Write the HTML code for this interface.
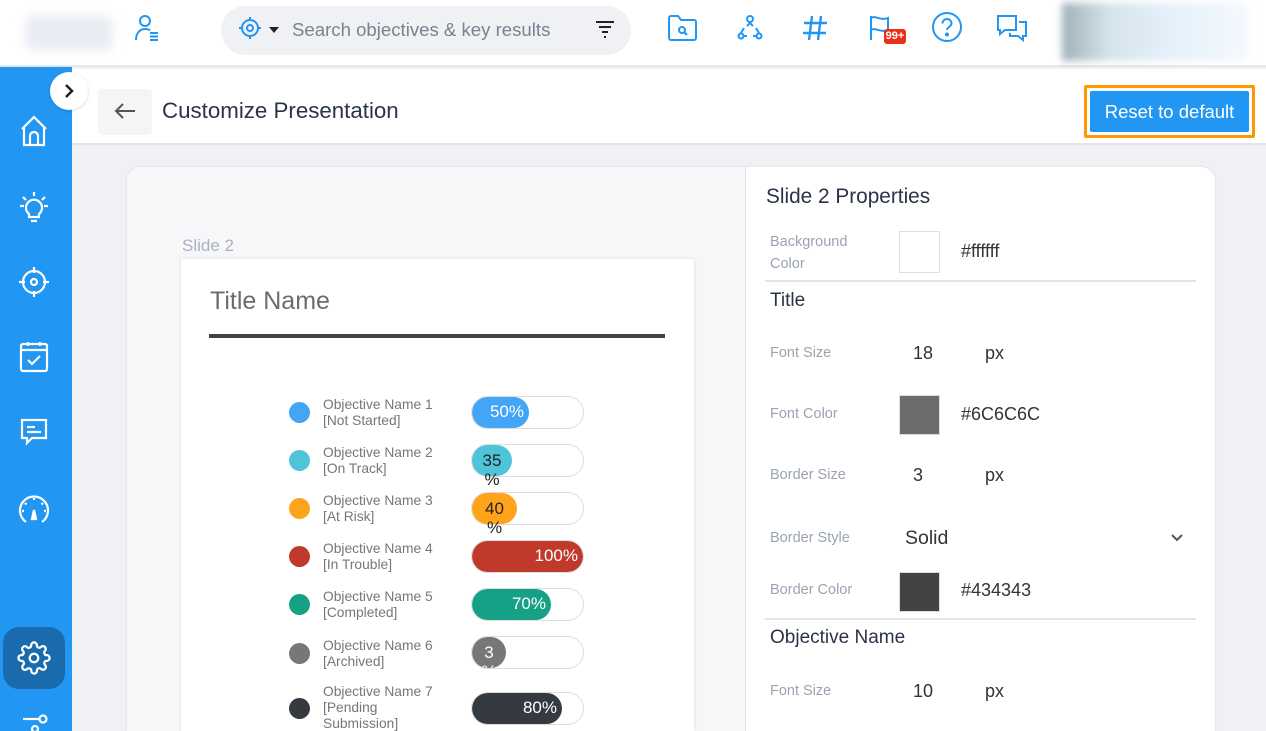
<!DOCTYPE html>
<html style="height:731px;overflow:hidden"><head><meta charset="utf-8"><style>
*{margin:0;padding:0;box-sizing:border-box}
body{width:1266px;height:731px;overflow:hidden;background:#f0f1f5;font-family:"Liberation Sans",sans-serif;position:relative}
.a{position:absolute}
.top{left:0;top:0;width:1266px;height:67px;background:#fff;border-bottom:2px solid #e4e6ea}
.side{left:0;top:67px;width:72px;height:664px;background:#2196f3}
.hdr{left:72px;top:69px;width:1194px;height:76px;background:#fff;border-bottom:2px solid #e2e4e8}
.lbl{color:#9aa3b2;font-size:14.5px}
.val{color:#333;font-size:18px}
.sec{color:#2b3348;font-size:19px}
.row{font-size:13.8px;color:#777;line-height:16px}
.bar{width:113px;height:33px;border:1.5px solid #ddd;border-radius:17px;overflow:hidden;left:471px}
.fill{position:absolute;left:0;top:0;bottom:0;border-radius:17px;color:#fff;font-size:17px;text-align:right;padding-right:5px;line-height:30px}
.dot{width:21px;height:21px;border-radius:50%;left:289px}
svg{position:absolute}
</style></head><body>
<div class="a top"></div>
<div class="a" style="left:25px;top:16px;width:88px;height:34px;background:#e9ecf3;filter:blur(5px);border-radius:8px"></div>
<svg style="left:134px;top:14px" width="26" height="28" viewBox="0 0 26 28" fill="none" stroke="#2196f3" stroke-width="2"><circle cx="11" cy="7" r="5"/><path d="M2 26c0-7 4-11 9-11 2 0 4 .5 5 1.5"/><path d="M16 19h8M16 22.5h8M16 26h8"/></svg>
<div class="a" style="left:221px;top:6px;width:410px;height:49px;background:#f0f1f5;border-radius:25px"></div>
<svg style="left:238px;top:16px" width="26" height="26" viewBox="0 0 26 26" fill="none" stroke="#2196f3" stroke-width="2"><circle cx="12" cy="12" r="8"/><circle cx="12" cy="12" r="3"/><path d="M12 1v4M12 19v4M1 12h4M19 12h4"/></svg>
<svg style="left:268px;top:26px" width="12" height="8"><path d="M1 1h10l-5 6z" fill="#222"/></svg>
<div class="a" style="left:292px;top:19px;font-size:18.6px;color:#7c8190">Search objectives &amp; key results</div>
<svg style="left:595px;top:19px" width="20" height="20" fill="none" stroke="#222" stroke-width="2"><path d="M1 3h18M4 8h12M7 13h6M9 18h2"/></svg>
<svg style="left:667px;top:14px" width="32" height="28" fill="none" stroke="#2196f3" stroke-width="2"><path d="M2 4a2 2 0 012-2h7l3 4h13a2 2 0 012 2v16a2 2 0 01-2 2H4a2 2 0 01-2-2z"/><circle cx="15" cy="16" r="3"/><path d="M17 18l3 3"/></svg>
<svg style="left:736px;top:14px" width="28" height="28" fill="none" stroke="#2196f3" stroke-width="2"><circle cx="14" cy="5" r="3"/><path d="M11 12l3-3 3 3"/><circle cx="5" cy="22" r="2.5"/><circle cx="23" cy="22" r="2.5"/><path d="M5 19l3-5M23 19l-3-5M8 22h3M17 22h3"/></svg>
<svg style="left:802px;top:14px" width="26" height="28" fill="none" stroke="#2196f3" stroke-width="2.4"><path d="M10 2L7 26M19 2l-3 24M2 9h23M1 19h23"/></svg>
<svg style="left:869px;top:14px" width="24" height="28" fill="none" stroke="#2196f3" stroke-width="2"><path d="M2 2v24M2 4c5-3 9 3 17 0v12c-8 3-12-3-17 0"/></svg>
<div class="a" style="left:884px;top:29px;width:22px;height:15px;background:#e8311a;border-radius:3px;color:#fff;font-size:11px;font-weight:bold;text-align:center;line-height:15px">99+</div>
<svg style="left:931px;top:11px" width="32" height="32" fill="none" stroke="#2196f3" stroke-width="2"><circle cx="16" cy="16" r="14"/><path d="M11.5 12.5a4.5 4.5 0 019 0c0 3-4.5 3.5-4.5 6.5"/><circle cx="16" cy="23.5" r="1" fill="#2196f3"/></svg>
<svg style="left:996px;top:14px" width="32" height="28" fill="none" stroke="#2196f3" stroke-width="2"><path d="M2 2h18v14H9l-5 4v-4H2z"/><path d="M23 8h7v14h-3v4l-5-4h-8v-3"/></svg>
<div class="a" style="left:1062px;top:3px;width:186px;height:58px;background:linear-gradient(90deg,#9fb0b8 0,#d5e3ea 25%,#e6f1fb 60%,#f4f9fe);filter:blur(4px)"></div>

<div class="a side"></div>
<div class="a hdr"></div>
<div class="a" style="left:50px;top:72px;width:38px;height:38px;border-radius:50%;background:#fff;box-shadow:0 1px 3px rgba(0,0,0,.15)"></div>
<svg style="left:62px;top:83px" width="14" height="16" fill="none" stroke="#222" stroke-width="2.5"><path d="M4 2l6 6-6 6"/></svg>
<svg style="left:19px;top:114px" width="30" height="34" fill="none" stroke="#fff" stroke-width="2.2"><path d="M3 15L15 3l12 12M5 13v18h20V13M11 31V22a4 4 0 018 0v9"/></svg>
<svg style="left:19px;top:191px" width="30" height="34" fill="none" stroke="#fff" stroke-width="2.2"><path d="M10 23a8 8 0 1110 0v3h-10z"/><path d="M12 30h6M15 1v4M4 6l3 3M26 6l-3 3M1 15h4M25 15h4"/></svg>
<svg style="left:18px;top:266px" width="32" height="32" fill="none" stroke="#fff" stroke-width="2.2"><circle cx="16" cy="16" r="11"/><circle cx="16" cy="16" r="3"/><path d="M16 1v6M16 25v6M1 16h6M25 16h6"/></svg>
<svg style="left:19px;top:341px" width="30" height="32" fill="none" stroke="#fff" stroke-width="2.2"><rect x="2" y="3" width="26" height="27" rx="2"/><path d="M2 9h26M9 1v4M21 1v4M9 19l4 4 8-8"/></svg>
<svg style="left:19px;top:418px" width="30" height="30" fill="none" stroke="#fff" stroke-width="2.2"><path d="M3 2h24v18H13l-5 5v-5H3z"/><path d="M8 9h8M8 14h14"/></svg>
<svg style="left:17px;top:492px" width="34" height="34" fill="none" stroke="#fff" stroke-width="2.2"><path d="M9 30A14 14 0 1125 30"/><path d="M17 18l-2 9h4z" fill="#fff"/><path d="M17 6v2M8 11l1.5 1.5M26 11l-1.5 1.5M5 19h2M27 19h2"/></svg>
<div class="a" style="left:3px;top:627px;width:62px;height:62px;border-radius:16px;background:#1a6aae"></div>
<svg style="left:17px;top:641px" width="34" height="34" viewBox="0 0 24 24" fill="none" stroke="#fff" stroke-width="1.6"><circle cx="12" cy="12" r="3"/><path d="M19.4 15a1.65 1.65 0 00.33 1.82l.06.06a2 2 0 11-2.830 2.83l-.06-.06a1.65 1.65 0 00-1.82-.33 1.65 1.65 0 00-1 1.51V21a2 2 0 11-4 0v-.09A1.65 1.65 0 009 19.4a1.65 1.65 0 00-1.82.33l-.06.06a2 2 0 11-2.83-2.830l.06-.06A1.65 1.65 0 004.68 15a1.65 1.65 0 00-1.51-1H3a2 2 0 110-4h.09A1.65 1.65 0 004.6 9a1.65 1.65 0 00-.33-1.82l-.06-.06a2 2 0 112.83-2.83l.06.06A1.65 1.65 0 009 4.68a1.65 1.65 0 001-1.51V3a2 2 0 114 0v.09a1.65 1.65 0 001 1.51 1.65 1.65 0 001.82-.33l.06-.06a2 2 0 112.83 2.83l-.06.06A1.65 1.65 0 0019.4 9a1.65 1.65 0 001.51 1H21a2 2 0 110 4h-.09a1.65 1.65 0 00-1.51 1z"/></svg>
<svg style="left:22px;top:712px" width="28" height="19" fill="none" stroke="#fff" stroke-width="2.2"><path d="M1 7h16"/><circle cx="21" cy="7" r="3.5"/><circle cx="13" cy="17" r="3"/></svg>

<div class="a" style="left:98px;top:89px;width:54px;height:46px;background:#f4f5f7;border-radius:4px"></div>
<svg style="left:114px;top:102px" width="22" height="18" fill="none" stroke="#555" stroke-width="2"><path d="M21 9H2M9 2L2 9l7 7"/></svg>
<div class="a" style="left:162px;top:98px;font-size:22.3px;color:#2b3348">Customize Presentation</div>
<div class="a" style="left:1084px;top:85px;width:171px;height:53px;border:3px solid #ff9800;border-radius:2px;background:#fff"></div>
<div class="a" style="left:1090px;top:91px;width:159px;height:41px;background:#2196f3;border-radius:2px;color:#fff;font-size:18.5px;text-align:center;line-height:41px">Reset to default</div>

<div class="a" style="left:127px;top:167px;width:1088px;height:564px;background:#fff;border-radius:14px 14px 0 0;box-shadow:0 0 2px rgba(0,0,0,.12)"></div>
<div class="a" style="left:127px;top:167px;width:619px;height:564px;background:#f7f7f9;border-radius:14px 0 0 0;border-right:1.5px solid #e4e5e9"></div>
<div class="a" style="left:182px;top:236px;font-size:17px;color:#a8b2c4">Slide 2</div>
<div class="a" style="left:181px;top:259px;width:513px;height:472px;background:#fff;box-shadow:0 0 3px rgba(0,0,0,.13)"></div>
<div class="a" style="left:210px;top:287px;font-size:25px;color:#6c6c6c">Title Name</div>
<div class="a" style="left:209px;top:334px;width:456px;height:4px;background:#434343"></div>

<div class="a dot" style="top:402px;background:#42a5f5"></div>
<div class="a row" style="left:323px;top:397px">Objective Name 1<br>[Not Started]</div>
<div class="a bar" style="top:396px"><div class="fill" style="width:57px;background:#42a5f5">50%</div></div>

<div class="a dot" style="top:450px;background:#4fc3d9"></div>
<div class="a row" style="left:323px;top:445px">Objective Name 2<br>[On Track]</div>
<div class="a bar" style="top:444px;overflow:visible"><div class="fill" style="width:40px;background:#4fc3d9;color:#222;text-align:center;padding:0;line-height:19px;padding-top:6px">35<br>%</div></div>

<div class="a dot" style="top:498px;background:#ffa31a"></div>
<div class="a row" style="left:323px;top:493px">Objective Name 3<br>[At Risk]</div>
<div class="a bar" style="top:492px;overflow:visible"><div class="fill" style="width:45px;background:#ffa31a;color:#222;text-align:center;padding:0;line-height:19px;padding-top:6px">40<br>%</div></div>

<div class="a dot" style="top:546px;background:#c0392b"></div>
<div class="a row" style="left:323px;top:541px">Objective Name 4<br>[In Trouble]</div>
<div class="a bar" style="top:540px"><div class="fill" style="width:111px;background:#c0392b">100%</div></div>

<div class="a dot" style="top:594px;background:#16a085"></div>
<div class="a row" style="left:323px;top:589px">Objective Name 5<br>[Completed]</div>
<div class="a bar" style="top:588px"><div class="fill" style="width:79px;background:#16a085">70%</div></div>

<div class="a dot" style="top:643px;background:#777"></div>
<div class="a row" style="left:323px;top:638px">Objective Name 6<br>[Archived]</div>
<div class="a bar" style="top:636px"><div class="fill" style="width:34px;background:#777;text-align:center;padding:0;line-height:19px;padding-top:6px">3<br>%</div></div>

<div class="a dot" style="top:698px;background:#343a40"></div>
<div class="a row" style="left:323px;top:684px">Objective Name 7<br>[Pending<br>Submission]</div>
<div class="a bar" style="top:692px"><div class="fill" style="width:90px;background:#343a40">80%</div></div>

<div class="a" style="left:766px;top:185px;font-size:20.8px;color:#2b3348">Slide 2 Properties</div>
<div class="a lbl" style="left:770px;top:231px;line-height:22px">Background<br>Color</div>
<div class="a" style="left:899px;top:231px;width:41px;height:42px;border:1.5px solid #e0e0e0;background:#fff"></div>
<div class="a val" style="left:961px;top:241px">#ffffff</div>
<div class="a" style="left:765px;top:280px;width:431px;height:1.5px;background:#e4e5e9"></div>
<div class="a sec" style="left:770px;top:290px">Title</div>
<div class="a lbl" style="left:770px;top:345px">Font Size</div>
<div class="a val" style="left:913px;top:343px">18</div>
<div class="a val" style="left:985px;top:343px">px</div>
<div class="a lbl" style="left:770px;top:406px">Font Color</div>
<div class="a" style="left:899px;top:395px;width:41px;height:40px;background:#6c6c6c;border:1px solid #ddd"></div>
<div class="a val" style="left:961px;top:404px">#6C6C6C</div>
<div class="a lbl" style="left:770px;top:467px">Border Size</div>
<div class="a val" style="left:913px;top:465px">3</div>
<div class="a val" style="left:985px;top:465px">px</div>
<div class="a lbl" style="left:770px;top:530px">Border Style</div>
<div class="a" style="left:905px;top:527px;font-size:19.5px;color:#333">Solid</div>
<svg style="left:1170px;top:533px" width="14" height="10" fill="none" stroke="#555" stroke-width="2"><path d="M2 2l5 5 5-5"/></svg>
<div class="a lbl" style="left:770px;top:582px">Border Color</div>
<div class="a" style="left:899px;top:572px;width:41px;height:40px;background:#434343;border:1px solid #ddd"></div>
<div class="a val" style="left:961px;top:580px">#434343</div>
<div class="a" style="left:765px;top:618px;width:431px;height:1.5px;background:#e4e5e9"></div>
<div class="a sec" style="left:770px;top:627px">Objective Name</div>
<div class="a lbl" style="left:770px;top:683px">Font Size</div>
<div class="a val" style="left:913px;top:681px">10</div>
<div class="a val" style="left:985px;top:681px">px</div>
</body></html>
